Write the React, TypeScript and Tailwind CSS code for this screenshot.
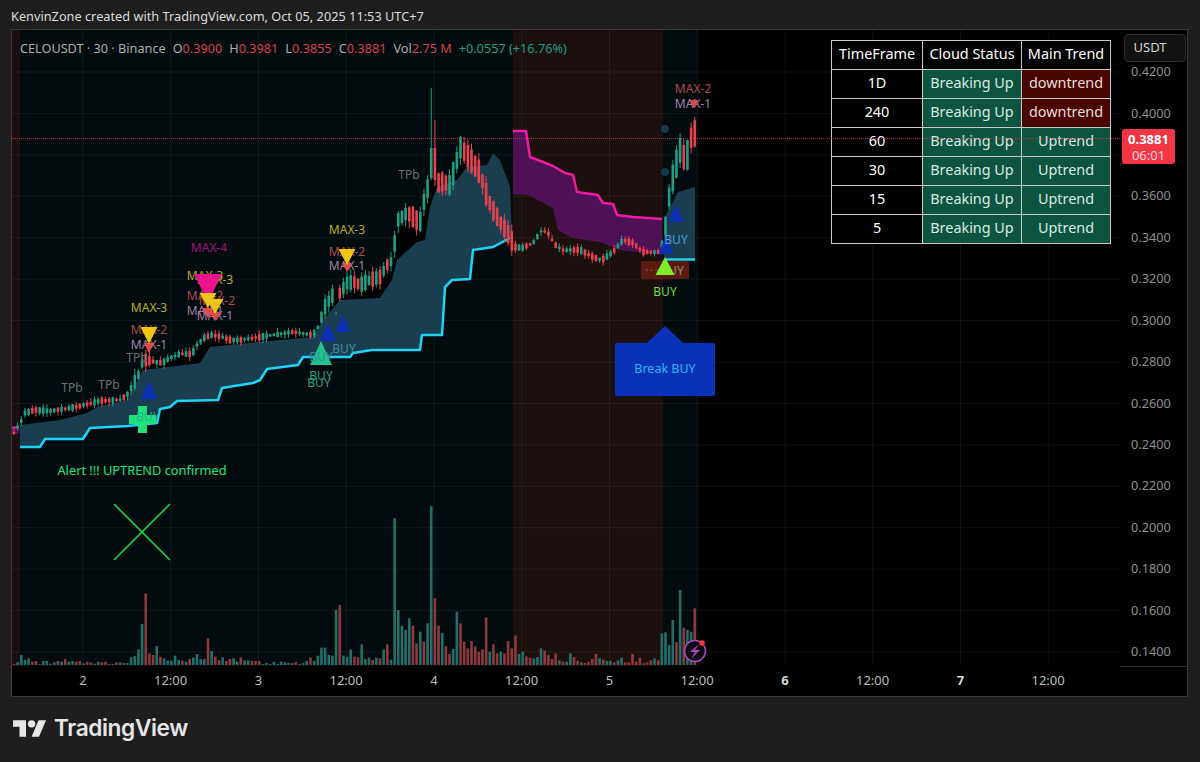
import { Fragment } from 'react'

// signed volume heights, positive = up bar, negative = down bar (one per candle)
const volumes = [
  -3, 8, 30, 15, 20, -10, -12, 3, 12, 12, 4, 8, -12, 10, -18, 10, 12, -10, -12, 5, -10, -7, 4, 10, -8, -10, -3, 3, -8, 8, -6, 6,
  24, 27, 47, 123, -215, -35, -30, 57, -25, 20, 13, 13, 28, 15, -13, 10, -18, 22, 33, 18, 18, -80, 42, -25, -15, 23, -12, -18, 20,
  10, -23, 14, 14, -12, -12, -12, 3, 6, 3, 10, 3, 10, 8, 7, -6, -9, 3, 6, 12, -23, 12, 28, 52, 52, 30, 28, 165, -180, 28, 25, 46,
  -25, -23, 62, 18, 22, -15, 22, -20, 46, -62, 16, 440, 165, 118, 105, 140, -118, -65, 100, -70, 125, 476, -200, -118, 96, -56, -33,
  48, 160, -125, -70, -50, -72, -56, -40, -47, -143, 40, -62, -35, 40, -35, -72, -50, -88, 33, 40, -26, -22, 20, 24, 50, -43, -30,
  -18, -35, 14, -10, 10, 35, -24, -12, 8, -6, -10, -18, -33, 20, -16, 12, 12, -8, 14, 22, -8, -8, -33, -10, -22, -5, -8, -14, 20,
  -14, 95, 98, 60, 135, -68, 225, -112, 105, 100, -170,
]

const pricePath = [
  [14, 433], [22, 420], [25, 413], [35, 410], [50, 411], [70, 408], [80, 406], [100, 401], [120, 400], [127, 395], [133, 385], [140, 372],
  [143, 360], [147, 360], [155, 362], [162, 363], [170, 358], [180, 354], [192, 354], [197, 345], [205, 337], [212, 335], [222, 337],
  [230, 340], [240, 340], [260, 337], [293, 332], [313, 335], [318, 327], [325, 307], [333, 295], [340, 293], [347, 283], [355, 282],
  [360, 285], [370, 280], [380, 277], [387, 265], [393, 260], [395, 240], [398, 220], [407, 213], [413, 217], [420, 223], [423, 205],
  [428, 187], [432, 160], [435, 170], [438, 183], [443, 182], [450, 185], [457, 160], [460, 147], [467, 155], [473, 163], [480, 173],
  [487, 197], [493, 210], [500, 222], [507, 232], [515, 247], [522, 248], [533, 243], [542, 230], [548, 233], [555, 245], [563, 250],
  [580, 250], [593, 257], [602, 260], [613, 252], [623, 240], [633, 243], [643, 252], [660, 252], [665, 230], [668, 203], [673, 177],
  [680, 150], [683, 157], [687, 157], [691, 138], [695, 133],
]

const cloudTop = [
  [20, 425], [60, 420], [87, 413], [97, 407], [127, 400], [143, 370], [160, 368], [200, 363], [210, 347], [260, 342], [313, 337], [323, 320],
  [340, 300], [380, 298], [392, 280], [397, 260], [417, 242], [425, 240], [430, 207], [437, 187], [457, 180], [467, 167], [487, 165],
  [493, 153], [500, 160], [510, 187], [512, 237],
]

const cloudLine = [
  [20, 447], [40, 447], [45, 439], [83, 439], [90, 428], [128, 426], [157, 423], [160, 409], [170, 407], [177, 401], [218, 400], [222, 388],
  [253, 383], [260, 380], [267, 369], [298, 365], [303, 357], [350, 357], [353, 353], [372, 350], [420, 350], [422, 335], [442, 335],
  [445, 287], [452, 280], [470, 279], [473, 250], [493, 247], [510, 238],
]

const redLine = [
  [513, 131], [526, 131], [530, 157], [543, 162], [553, 166], [565, 173], [573, 175], [577, 192], [598, 195], [603, 203], [613, 204],
  [617, 215], [633, 217], [662, 219],
]

const redBottom = [[513, 194], [528, 195], [553, 208], [558, 230], [572, 238], [600, 242], [620, 250], [662, 255]]

const upCloud = [[664, 260], [664, 225], [667, 213], [678, 192], [695, 187], [695, 260]]

const pts = (list: number[][]) => list.map((p) => p.join(',')).join(' ')

const interp = (list: number[][], x: number) => {
  for (let i = 1; i < list.length; i++) {
    if (x <= list[i][0]) {
      const [x0, y0] = list[i - 1]
      const [x1, y1] = list[i]
      return y0 + ((y1 - y0) * (x - x0)) / (x1 - x0)
    }
  }
  return list[list.length - 1][1]
}

let seed = 7
const rand = () => {
  seed = (seed * 16807) % 2147483647
  return seed / 2147483647
}

const overrides: Record<number, number[]> = {
  88: [290, 268, 315, 312],
  114: [148, 178, 88, 180],
  115: [148, 180, 120, 186],
}

// how far a candle body and wick may reach, by stretch of the chart
const swing = (x: number) => {
  if (x > 392 && x < 512) return [12, 12, 7]
  if (x > 664) return [16, 14, 6]
  if (x > 318 && x < 392) return [7, 9, 6]
  if (x > 132 && x < 150) return [8, 6, 8]
  return [2, 5, 4]
}

// in the big moves the candle colour follows the direction of the move
const isUp = (x: number, v: number) => {
  if ((x > 392 && x < 512) || x > 664) {
    const slope = interp(pricePath, x + 4) - interp(pricePath, x - 4)
    if (x > 690) return false
    return slope < 0
  }
  return v > 0
}

const candles = volumes.map((v, i) => {
  const x = 14 + i * 3.66
  const [base, spread, wick] = swing(x)
  const y = interp(pricePath, x)
  const body = base + rand() * spread
  const ov = overrides[i]
  if (ov) return { x, up: v > 0, top: ov[0], bottom: ov[1], hi: ov[2], lo: ov[3] }
  return { x, up: isUp(x, v), top: y - body / 2, bottom: y + body / 2, hi: y - body / 2 - rand() * wick, lo: y + body / 2 + rand() * wick }
})

const hLines = Array.from({ length: 15 }, (_, i) => 72 + i * 41.43)
const vLines = Array.from({ length: 12 }, (_, i) => 83 + i * 87.75)

const prices = ['0.4200', '0.4000', '', '0.3600', '0.3400', '0.3200', '0.3000', '0.2800', '0.2600', '0.2400', '0.2200', '0.2000', '0.1800', '0.1600', '0.1400']
const times = ['2', '12:00', '3', '12:00', '4', '12:00', '5', '12:00', '6', '12:00', '7', '12:00']

const labels: [string, number, number, string][] = [
  ['TPb', 72, 392, '#6b6f6e'],
  ['TPb', 109, 389, '#6b6f6e'],
  ['TPb', 137, 362, '#6b6f6e'],
  ['TPb', 409, 179, '#6b6f6e'],
  ['MAX-3', 149, 312, '#bcae1a'],
  ['MAX-2', 149, 334, '#b04a48'],
  ['MAX-1', 149, 349, '#a680a0'],
  ['MAX-4', 209, 252, '#a5107e'],
  ['MAX-3', 205, 280, '#bcae1a'],
  ['MAX-3', 215, 284, '#bcae1a'],
  ['MAX-2', 205, 300, '#b04a48'],
  ['MAX-2', 217, 305, '#b04a48'],
  ['MAX-1', 205, 315, '#a680a0'],
  ['MAX-1', 215, 320, '#a680a0'],
  ['MAX-3', 347, 234, '#bcae1a'],
  ['MAX-2', 347, 256, '#b04a48'],
  ['MAX-1', 347, 270, '#a680a0'],
  ['MAX-2', 693, 93, '#b04a48'],
  ['MAX-1', 693, 108, '#a680a0'],
]

const buyLabels: [number, number, string][] = [
  [148, 421, '#27b184'],
  [344, 353, '#3f8ea3'],
  [321, 361, '#2f8f97'],
  [321, 380, '#2a9d8a'],
  [319, 387, '#2a9d8a'],
  [676, 244, '#4b9ed8'],
  [672, 275, '#8a8a7a'],
  [665, 296, '#74dd37'],
]

const tri = (x: number, y: number, w: number, h: number, down: boolean) =>
  down ? `${x - w / 2},${y} ${x + w / 2},${y} ${x},${y + h}` : `${x - w / 2},${y + h} ${x + w / 2},${y + h} ${x},${y}`

const downArrows: [number, number, number, number, string][] = [
  [149, 343, 10, 10, '#e5484d'],
  [149, 327, 17, 17, '#eec512'],
  [208, 308, 12, 10, '#e5484d'],
  [215, 312, 11, 9, '#e5484d'],
  [208, 274, 28, 28, '#ec138f'],
  [208, 293, 17, 15, '#eec512'],
  [215, 299, 17, 15, '#eec512'],
  [347, 263, 10, 9, '#e5484d'],
  [347, 249, 17, 16, '#eec512'],
  [694, 100, 8, 8, '#e5484d'],
]

const upArrows: [number, number, number, number, string][] = [
  [149, 381, 17, 18, '#0d2fb4'],
  [328, 323, 16, 18, '#0d2fb4'],
  [343, 315, 15, 17, '#0d2fb4'],
  [666, 236, 15, 18, '#0d2fb4'],
  [676, 205, 16, 17, '#0d2fb4'],
  [321, 341, 22, 24, '#22c08c'],
]

const rows = [
  ['1D', 'downtrend'],
  ['240', 'downtrend'],
  ['60', 'Uptrend'],
  ['30', 'Uptrend'],
  ['15', 'Uptrend'],
  ['5', 'Uptrend'],
]

function Chart() {
  return (
    <svg viewBox="12 30 1108 636" width={1108} height={636} className="block">
      <rect x={12} y={30} width={8} height={636} fill="#1c0f0f" />
      <rect x={20} y={30} width={493} height={636} fill="#020c0e" />
      <rect x={513} y={30} width={150} height={636} fill="#1c100f" />
      <rect x={663} y={30} width={35} height={636} fill="#020c0e" />

      {hLines.map((y) => (
        <line key={y} x1={12} x2={1120} y1={y} y2={y} stroke="#fff" strokeOpacity={0.06} />
      ))}
      {vLines.map((x) => (
        <line key={x} x1={x} x2={x} y1={30} y2={666} stroke="#fff" strokeOpacity={0.06} />
      ))}

      {/* clouds */}
      <polygon points={pts([...pricePath.filter((p) => p[0] >= 22 && p[0] <= 510), ...[...cloudTop].reverse()])} fill="#010405" />
      <polygon points={pts([...cloudTop, ...[...cloudLine].reverse()])} fill="#1a3e50" />
      <polygon points={pts([...redLine, ...[...redBottom].reverse()])} fill="#4e1254" />
      <polygon points={pts(upCloud)} fill="#1a3e50" />
      <polygon points="12,428 19,428 19,434 12,434" fill="#4e1254" />
      <polyline points={pts(cloudLine)} fill="none" stroke="#1fd3f2" strokeWidth={2.5} strokeLinejoin="round" />
      <polyline points={pts(redLine)} fill="none" stroke="#f01aa0" strokeWidth={2.5} strokeLinejoin="round" />
      <line x1={12} x2={19} y1={427.5} y2={427.5} stroke="#f01aa0" strokeWidth={2} />
      <line x1={665} x2={695} y1={259.5} y2={259.5} stroke="#1fd3f2" strokeWidth={2.5} />
      <circle cx={665} cy={129} r={4} fill="#123a48" />
      <circle cx={665} cy={172} r={4} fill="#123a48" />

      {/* volume */}
      {volumes.map((v, i) => (
        <rect key={i} x={12.7 + i * 3.66} y={665 - Math.abs(v) / 3} width={2.6} height={Math.abs(v) / 3} fill={v > 0 ? '#236e69' : '#8c3a3e'} />
      ))}

      {/* candles */}
      {candles.map((c, i) => {
        const color = c.up ? '#1f9e84' : '#e8424f'
        return (
          <Fragment key={i}>
            <line x1={c.x} x2={c.x} y1={c.hi} y2={c.lo} stroke={color} />
            <rect x={c.x - 1.3} y={c.top} width={2.6} height={c.bottom - c.top} fill={color} />
          </Fragment>
        )
      })}

      {/* signals */}
      <rect x={138} y={406} width={9} height={27} fill="#1de27c" />
      <rect x={129} y={415} width={27} height={9} fill="#1de27c" />
      <line x1={114} y1={504} x2={170} y2={560} stroke="#1fdc3f" strokeWidth={1.5} />
      <line x1={170} y1={504} x2={114} y2={560} stroke="#1fdc3f" strokeWidth={1.5} />

      {labels.map(([t, x, y, c], i) => (
        <text key={i} x={x} y={y} fontSize={12} textAnchor="middle" fill={c}>
          {t}
        </text>
      ))}

      {upArrows.map(([x, y, w, h, c], i) => (
        <polygon key={i} points={tri(x, y, w, h, false)} fill={c} />
      ))}
      {downArrows.map(([x, y, w, h, c], i) => (
        <polygon key={i} points={tri(x, y, w, h, true)} fill={c} />
      ))}

      <rect x={641} y={261} width={48} height={18} rx={1} fill="#5a1a10" />
      <line x1={645} x2={686} y1={270} y2={270} stroke="#9a4a30" strokeDasharray="3 2" />
      {buyLabels.map(([x, y, c], i) => (
        <text key={i} x={x} y={y} fontSize={12} textAnchor="middle" fill={c}>
          BUY
        </text>
      ))}
      <polygon points={tri(665, 257, 19, 18, false)} fill="#7eee2a" />

      <text x={142} y={475} fontSize={12.8} textAnchor="middle" fill="#1de27c">
        Alert !!! UPTREND confirmed
      </text>

      {/* break label */}
      <path d="M617 343H647L665 326L683 343H713Q715 343 715 345V394Q715 396 713 396H617Q615 396 615 394V345Q615 343 617 343Z" fill="#0a32b8" />
      <text x={665} y={373} fontSize={12.5} textAnchor="middle" fill="#2bb5f0">
        Break BUY
      </text>

      {/* bolt button */}
      <circle cx={695} cy={651} r={10.5} fill="#0c0a10" stroke="#ab47bc" strokeWidth={1.5} />
      <path d="M699 644L690 652L695 652L691 659L700 650L695 650Z" fill="#ab47bc" />
      <circle cx={702} cy={643} r={2.8} fill="#f23645" />
    </svg>
  )
}

function Legend() {
  return (
    <div className="absolute top-[9px] left-[8px] flex gap-[7px] text-[12.7px] leading-[18px] text-[#a9adab] whitespace-nowrap">
      <span>CELOUSDT · 30 · Binance</span>
      <span>
        O<span className="text-[#d8404c]">0.3900</span>
      </span>
      <span>
        H<span className="text-[#d8404c]">0.3981</span>
      </span>
      <span>
        L<span className="text-[#d8404c]">0.3855</span>
      </span>
      <span>
        C<span className="text-[#d8404c]">0.3881</span>
      </span>
      <span>
        Vol<span className="text-[#d8404c]">2.75 M</span>
      </span>
      <span className="text-[#1f9e84]">+0.0557 (+16.76%)</span>
    </div>
  )
}

function StatusTable() {
  return (
    <table className="absolute top-[10px] left-[819px] w-[280px] h-[203px] table-fixed border-collapse text-[14.4px] text-center text-white">
      <thead>
        <tr className="h-[29px]">
          <th className="w-[91px] border border-[#c9c9c9] bg-black pb-[3px] font-normal">TimeFrame</th>
          <th className="w-[99px] border border-[#c9c9c9] bg-black pb-[3px] font-normal">Cloud Status</th>
          <th className="border border-[#c9c9c9] bg-black pb-[3px] font-normal">Main Trend</th>
        </tr>
      </thead>
      <tbody>
        {rows.map(([tf, trend]) => (
          <tr key={tf} className="h-[29px]">
            <td className="border border-[#c9c9c9] bg-black pb-[3px]">{tf}</td>
            <td className="border border-[#c9c9c9] bg-[#0c5340] pb-[3px] text-[#d9ece4]">Breaking Up</td>
            <td className={trend === 'downtrend' ? 'border border-[#c9c9c9] bg-[#4a0500] pb-[3px] text-[#ecdcda]' : 'border border-[#c9c9c9] bg-[#0c5340] pb-[3px] text-[#d9ece4]'}>{trend}</td>
          </tr>
        ))}
      </tbody>
    </table>
  )
}

export default function App() {
  return (
    <div className="flex h-[762px] w-[1200px] flex-col bg-[#1e1e1e] font-['Noto_Sans',sans-serif] overflow-hidden">
      <div className="h-[29px] pl-[11px] pt-[7px] text-[12.75px] leading-[18px] text-[#dcdcdc]">KenvinZone created with TradingView.com, Oct 05, 2025 11:53 UTC+7</div>

      {/* chart frame */}
      <div className="ml-[11px] flex h-[668px] w-[1177px] flex-col border border-[#3a3a3a] bg-black">
        <div className="flex h-[636px]">
          <div className="relative w-[1108px]">
            <Chart />
            <Legend />
            <StatusTable />
            <div className="absolute top-[108px] left-0 w-full border-t border-dotted border-[#f23645]/70" />
          </div>
          <div className="relative flex-1 pt-[21px] pl-[11px] text-[12.7px] text-[#8f8f8f]">
            {prices.map((p) => (
              <div key={p} className="flex h-[41.43px] items-center">
                {p}
              </div>
            ))}
            <div className="absolute top-[4px] left-[4px] flex h-[28px] w-[62px] items-center justify-center rounded-[4px] border border-[#2e2e2e] bg-[#121212] pr-[10px] text-[13px] text-[#d4d4d4]">USDT</div>
            <div className="absolute top-[99px] left-[2px] flex h-[35px] w-[53px] flex-col items-center justify-center rounded-[3px] bg-[#f23645] text-[13px] leading-[16px]">
              <span className="font-bold text-white">0.3881</span>
              <span className="text-[#ffd4d8]">06:01</span>
            </div>
          </div>
        </div>
        <div className="flex h-[30px]">
          <div className="flex w-[1108px] items-center pl-[27px] text-[13px] text-[#bdbdbd]">
            {times.map((t, i) => (
              <div key={i} className={i === 8 || i === 10 ? 'w-[87.75px] text-center font-bold text-[#d6d6d6]' : 'w-[87.75px] text-center'}>
                {t}
              </div>
            ))}
          </div>
          <div className="flex-1 border-t border-[#333]" />
        </div>
      </div>

      {/* footer logo */}
      <div className="flex items-center gap-[8px] pl-[13px] pt-[18px] text-[#e6e6e6]">
        <svg viewBox="0 4 35.5 18" width={33} height={17} fill="currentColor">
          <path d="M14 22H7V11H0V4h14v18zM28 22h-8l7.5-18h8L28 22z" />
          <circle cx="20" cy="8" r="4" />
        </svg>
        <span className="font-['Inter',sans-serif] text-[22.7px] leading-[26px] font-semibold tracking-[-0.4px]">TradingView</span>
      </div>
    </div>
  )
}
